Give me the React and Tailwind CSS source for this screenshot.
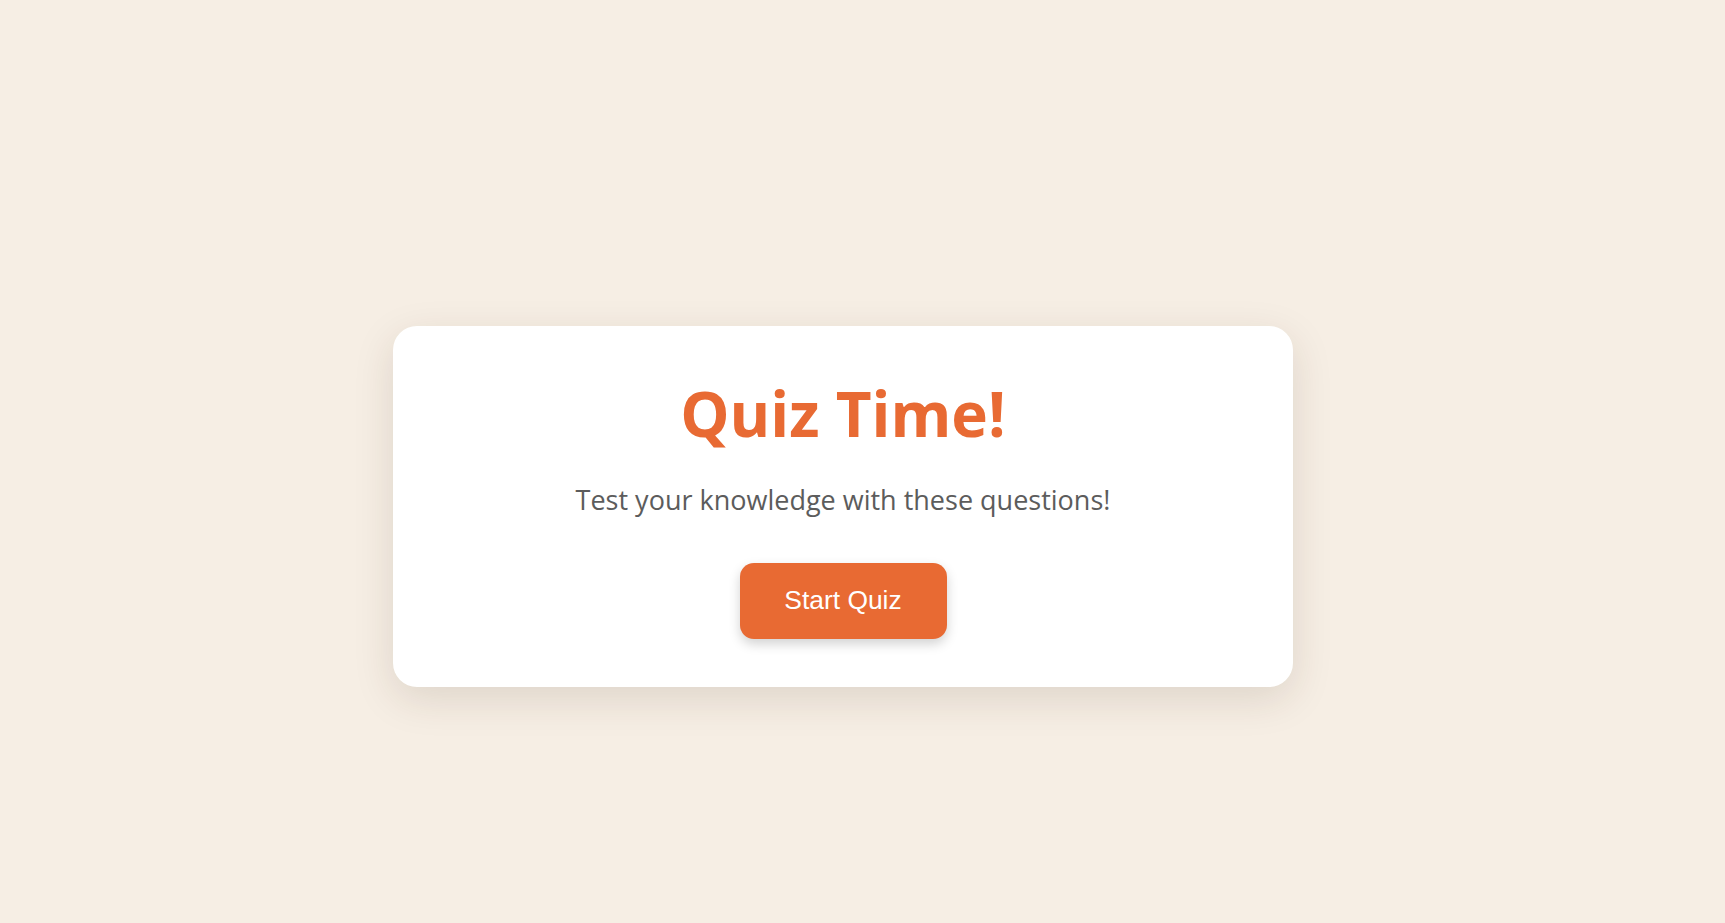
export default function App() {
  return (
    <div className="min-h-screen w-full bg-[#f6eee4] flex justify-center pt-[326px] pr-[39px]">
      <div className="w-[900px] h-[361px] bg-white rounded-[24px] shadow-[0_12px_40px_rgba(60,40,20,0.13)] flex flex-col items-center pt-[50px]">
        <h1 className="font-['Open_Sans',sans-serif] font-bold text-[62px] leading-[74px] text-[#e86a33]">
          Quiz Time!
        </h1>
        <p className="mt-[32px] font-['Open_Sans',sans-serif] text-[27px] leading-[36px] text-[#5c5c5c]">
          Test your knowledge with these questions!
        </p>
        <button className="mt-[45px] w-[207px] h-[76px] rounded-[14px] bg-[#e86a33] text-white font-['Liberation_Sans',Arial,sans-serif] text-[26.4px] shadow-[0_5px_12px_rgba(0,0,0,0.18)] cursor-pointer">
          Start Quiz
        </button>
      </div>
    </div>
  );
}
